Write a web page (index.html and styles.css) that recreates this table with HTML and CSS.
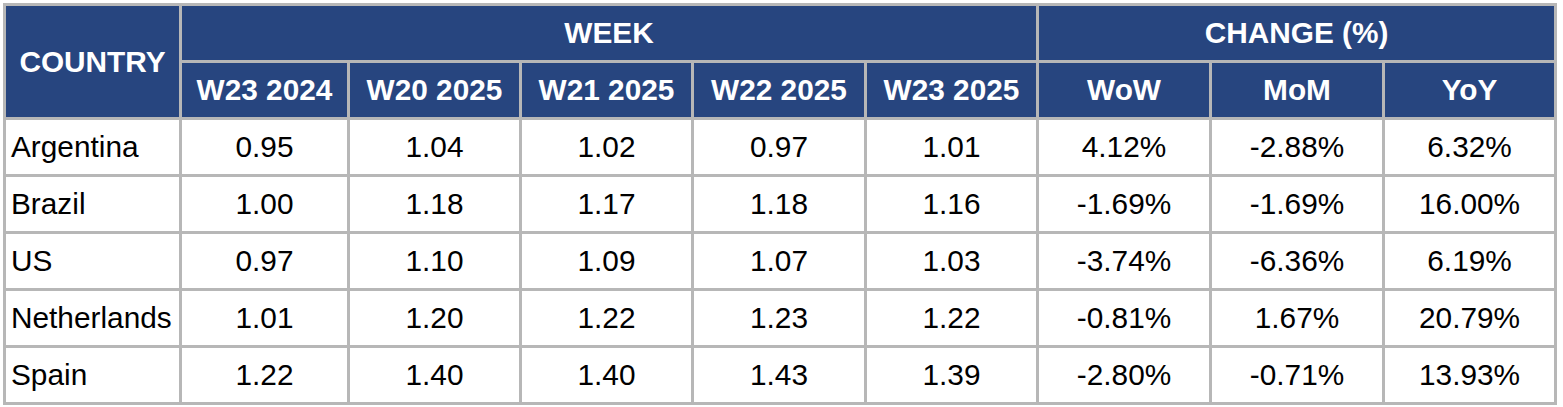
FILE: index.html
```html
<!DOCTYPE html>
<html>
<head>
<meta charset="utf-8">
<link rel="stylesheet" href="styles.css">
</head>
<body>
<table class="grid">
  <colgroup>
    <col class="c-country">
    <col class="c-w1">
    <col class="c-169">
    <col class="c-169">
    <col class="c-170">
    <col class="c-169">
    <col class="c-170">
    <col class="c-170">
    <col class="c-169">
  </colgroup>
  <thead>
    <tr>
      <th rowspan="2">COUNTRY</th>
      <th colspan="5">WEEK</th>
      <th colspan="3">CHANGE (%)</th>
    </tr>
    <tr>
      <th>W23 2024</th>
      <th>W20 2025</th>
      <th>W21 2025</th>
      <th>W22 2025</th>
      <th>W23 2025</th>
      <th>WoW</th>
      <th>MoM</th>
      <th>YoY</th>
    </tr>
  </thead>
  <tbody>
    <tr><td class="name">Argentina</td><td>0.95</td><td>1.04</td><td>1.02</td><td>0.97</td><td>1.01</td><td>4.12%</td><td>-2.88%</td><td>6.32%</td></tr>
    <tr><td class="name">Brazil</td><td>1.00</td><td>1.18</td><td>1.17</td><td>1.18</td><td>1.16</td><td>-1.69%</td><td>-1.69%</td><td>16.00%</td></tr>
    <tr><td class="name">US</td><td>0.97</td><td>1.10</td><td>1.09</td><td>1.07</td><td>1.03</td><td>-3.74%</td><td>-6.36%</td><td>6.19%</td></tr>
    <tr><td class="name">Netherlands</td><td>1.01</td><td>1.20</td><td>1.22</td><td>1.23</td><td>1.22</td><td>-0.81%</td><td>1.67%</td><td>20.79%</td></tr>
    <tr><td class="name">Spain</td><td>1.22</td><td>1.40</td><td>1.40</td><td>1.43</td><td>1.39</td><td>-2.80%</td><td>-0.71%</td><td>13.93%</td></tr>
  </tbody>
</table>
</body>
</html>
```

FILE: styles.css
```css
html, body {
  background: #ffffff;
}
body {
  margin: 3px;
  font-family: "Liberation Sans", Arial, sans-serif;
}
.grid {
  border-collapse: separate;
  border-spacing: 3px;
  background: #b7b7b7;
  table-layout: fixed;
  width: 1554px;
  font-size: 29.8px;
  color: #000;
}
.c-country { width: 173px; }
.c-w1 { width: 165px; }
.c-169 { width: 169px; }
.c-170 { width: 170px; }
.grid th,
.grid td {
  height: 54px;
  padding: 0 4px;
  text-align: center;
  vertical-align: middle;
  white-space: nowrap;
  overflow: hidden;
}
.grid th {
  background: #27457f;
  color: #ffffff;
  font-weight: bold;
}
.grid td {
  background: #ffffff;
}
.grid td.name {
  text-align: left;
  padding-left: 5px;
}
```
